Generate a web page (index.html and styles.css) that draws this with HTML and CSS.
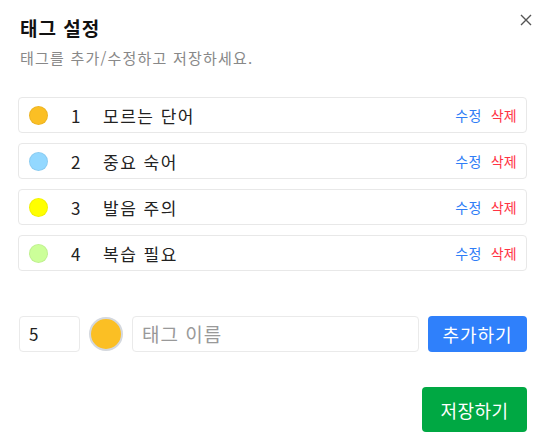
FILE: index.html
```html
<!DOCTYPE html>
<html lang="ko">
<head>
<meta charset="utf-8">
<link rel="stylesheet" href="styles.css">
</head>
<body>
<div class="dialog">
  <div class="close" aria-label="닫기">
    <svg width="12" height="12" viewBox="0 0 12 12"><path d="M1 1L11 11M11 1L1 11" stroke="#555" stroke-width="1.4" fill="none"/></svg>
  </div>
  <h1 class="title">태그 설정</h1>
  <p class="subtitle">태그를 추가/수정하고 저장하세요.</p>
  <div class="list">
    <div class="row">
      <span class="dot" style="background:#fbbf24"></span>
      <span class="num">1</span>
      <span class="name">모르는 단어</span>
      <span class="actions"><span class="edit">수정</span><span class="del">삭제</span></span>
    </div>
    <div class="row">
      <span class="dot" style="background:#93d8ff"></span>
      <span class="num">2</span>
      <span class="name">중요 숙어</span>
      <span class="actions"><span class="edit">수정</span><span class="del">삭제</span></span>
    </div>
    <div class="row">
      <span class="dot" style="background:#ffff00"></span>
      <span class="num">3</span>
      <span class="name">발음 주의</span>
      <span class="actions"><span class="edit">수정</span><span class="del">삭제</span></span>
    </div>
    <div class="row">
      <span class="dot" style="background:#ccff99"></span>
      <span class="num">4</span>
      <span class="name">복습 필요</span>
      <span class="actions"><span class="edit">수정</span><span class="del">삭제</span></span>
    </div>
  </div>
  <div class="add">
    <div class="num-input">5</div>
    <div class="color-pick"></div>
    <div class="name-input">태그 이름</div>
    <button class="btn-add">추가하기</button>
  </div>
  <div class="footer">
    <button class="btn-save">저장하기</button>
  </div>
</div>
</body>
</html>
```

FILE: styles.css
```css
html, body {
  margin: 0;
  padding: 0;
  background: #fff;
}
body {
  font-family: "Noto Sans CJK KR", "Noto Sans", sans-serif;
  color: #222;
}
.dialog {
  position: relative;
  width: 545px;
  height: 446px;
  box-sizing: border-box;
  padding: 15px 18px 0 18px;
}
.close {
  position: absolute;
  top: 14px;
  right: 13px;
  width: 12px;
  height: 12px;
  line-height: 0;
}
.title {
  margin: 0;
  font-size: 19px;
  font-weight: 700;
  letter-spacing: 1px;
  line-height: 26px;
  color: #111;
  padding-left: 2px;
}
.subtitle {
  margin: 7px 0 0 0;
  font-size: 15px;
  letter-spacing: 1.2px;
  line-height: 20px;
  color: #888;
  padding-left: 2px;
}
.list {
  margin-top: 29px;
  display: flex;
  flex-direction: column;
  gap: 10px;
}
.row {
  display: flex;
  align-items: center;
  height: 36px;
  box-sizing: border-box;
  border: 1px solid #e8e8e8;
  border-radius: 4px;
  padding: 0 9px 0 10px;
}
.dot {
  width: 19px;
  height: 19px;
  border-radius: 50%;
  flex: none;
  box-shadow: inset 0 0 0 1px rgba(0,0,0,0.06);
}
.num {
  margin-left: 23px;
  width: 32px;
  font-size: 17px;
  color: #222;
}
.name {
  flex: 1;
  font-size: 17px;
  letter-spacing: 1.5px;
  color: #222;
}
.actions {
  display: flex;
  gap: 9px;
  font-size: 14px;
  letter-spacing: 0.3px;
}
.edit { color: #2f7df6; }
.del { color: #ff3344; }
.add {
  margin-top: 45px;
  display: flex;
  align-items: center;
  gap: 9px;
  padding-left: 1px;
}
.num-input {
  width: 61px;
  height: 36px;
  box-sizing: border-box;
  border: 1px solid #eaeaea;
  border-radius: 4px;
  padding-left: 9px;
  font-size: 17px;
  line-height: 34px;
  color: #222;
}
.color-pick {
  width: 34px;
  height: 34px;
  box-sizing: border-box;
  border-radius: 50%;
  background: #fbbf24;
  border: 2px solid #d4d8de;
  flex: none;
}
.name-input {
  flex: 1;
  height: 36px;
  box-sizing: border-box;
  border: 1px solid #eaeaea;
  border-radius: 4px;
  padding-left: 9px;
  font-size: 19px;
  letter-spacing: 1px;
  line-height: 34px;
  color: #999;
}
.btn-add {
  width: 99px;
  height: 36px;
  border: none;
  border-radius: 4px;
  background: #2f80fb;
  color: #fff;
  font-family: inherit;
  font-size: 18px;
  letter-spacing: 1px;
  padding: 0;
  flex: none;
}
.footer {
  margin-top: 35px;
  display: flex;
  justify-content: flex-end;
}
.btn-save {
  width: 105px;
  height: 45px;
  border: none;
  border-radius: 4px;
  background: #00a843;
  color: #fff;
  font-family: inherit;
  font-size: 18px;
  letter-spacing: 0.5px;
  padding: 0;
}
```
